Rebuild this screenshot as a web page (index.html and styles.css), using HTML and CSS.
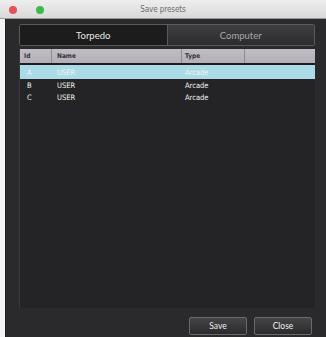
FILE: index.html
```html
<!DOCTYPE html>
<html>
<head>
<meta charset="utf-8">
<link rel="stylesheet" href="styles.css">
</head>
<body>
<div class="win">
  <div class="titlebar">
    <span class="dot red"></span>
    <span class="dot green"></span>
    <span class="title">Save presets</span>
  </div>
  <div class="content">
    <div class="tabs">
      <div class="tab active">Torpedo</div>
      <div class="tab">Computer</div>
    </div>
    <div class="table">
      <div class="row head">
        <div class="c id">Id</div>
        <div class="c name">Name</div>
        <div class="c type">Type</div>
        <div class="c rest"></div>
      </div>
      <div class="row sel">
        <div class="c id">A</div>
        <div class="c name">USER</div>
        <div class="c type">Arcade</div>
        <div class="c rest"></div>
      </div>
      <div class="row">
        <div class="c id">B</div>
        <div class="c name">USER</div>
        <div class="c type">Arcade</div>
        <div class="c rest"></div>
      </div>
      <div class="row">
        <div class="c id">C</div>
        <div class="c name">USER</div>
        <div class="c type">Arcade</div>
        <div class="c rest"></div>
      </div>
    </div>
    <div class="buttons">
      <div class="btn">Save</div>
      <div class="btn">Close</div>
    </div>
  </div>
</div>
</body>
</html>
```
FILE: styles.css
```css
html, body {
  margin: 0;
  padding: 0;
  background: #f4f4f4;
}
body {
  width: 326px;
  height: 337px;
  overflow: hidden;
  font-family: "Open Sans", "DejaVu Sans", sans-serif;
}
.win {
  width: 326px;
  height: 337px;
  display: flex;
  flex-direction: column;
}
.titlebar {
  height: 18px;
  flex: none;
  position: relative;
  display: flex;
  align-items: center;
  background: linear-gradient(#eeeeee, #d9d9d9);
  border-bottom: 1px solid #9a9a9a;
}
.dot {
  position: absolute;
  top: 6px;
  width: 8px;
  height: 8px;
  border-radius: 50%;
}
.red { left: 9px; background: #e8505a; }
.green { left: 36px; background: #3cba4a; }
.title {
  flex: 1;
  text-align: center;
  font-size: 8px;
  color: #6a6a6a;
  font-family: "DejaVu Sans Condensed", "DejaVu Sans", sans-serif;
  letter-spacing: -0.1px;
}
.content {
  flex: 1;
  margin-left: 5px;
  background: #2a2a2c;
  display: flex;
  flex-direction: column;
  padding: 5px 11px 0 13px;
  border-left: 1px solid #1e1e1e;
}
.tabs {
  height: 20px;
  display: flex;
  border: 1px solid #5a5a5c;
  border-radius: 2px;
  background: #1e1e1e;
  flex: none;
}
.tab {
  flex: 1;
  display: flex;
  align-items: center;
  justify-content: center;
  font-size: 9.5px;
  color: #a8a8a8;
  background: linear-gradient(#3e3e40, #2c2c2e);
  font-family: "Lato", "Open Sans", sans-serif;
}
.tab.active {
  background: #1c1c1c;
  color: #e6e6e6;
  border-right: 1px solid #5a5a5c;
}
.table {
  margin-top: 3px;
  flex: 1;
  background: #242426;
  border-left: 1px solid #3a3a3c;
  display: flex;
  flex-direction: column;
  font-family: "DejaVu Sans Condensed", "DejaVu Sans", sans-serif;
  font-size: 7.5px;
  color: #f4f4f4;
}
.row {
  display: flex;
  height: 12px;
  align-items: center;
}
.row.head {
  height: 14px;
  background: linear-gradient(#c0bcc4, #b4b0b8);
  color: #333;
  font-weight: bold;
  font-size: 6.5px;
  border-bottom: 2px solid #1e1e20;
}
.row.head .c { border-right: 1px solid #8e8a92; height: 100%; display: flex; align-items: center; }
.row.head .c.rest { border-right: none; }
.row.sel {
  background: #aadbe6;
  height: 14px;
}
.c { box-sizing: border-box; }
.id { width: 32px; padding-left: 4px; }
.row:not(.head) .id { padding-left: 7px; }
.name { width: 130px; padding-left: 5px; }
.type { width: 63px; padding-left: 3px; }
.rest { flex: 1; }
.buttons {
  height: 29px;
  flex: none;
  display: flex;
  justify-content: flex-end;
  gap: 7px;
  padding-top: 9px;
  padding-right: 3px;
  box-sizing: border-box;
}
.btn {
  width: 58px;
  height: 18px;
  box-sizing: border-box;
  border: 1px solid #6a6a6c;
  border-radius: 2px;
  background: linear-gradient(#454547, #2a2a2c);
  color: #f0f0f0;
  font-size: 8.5px;
  font-family: "Lato", "Open Sans", sans-serif;
  display: flex;
  align-items: center;
  justify-content: center;
}
```
